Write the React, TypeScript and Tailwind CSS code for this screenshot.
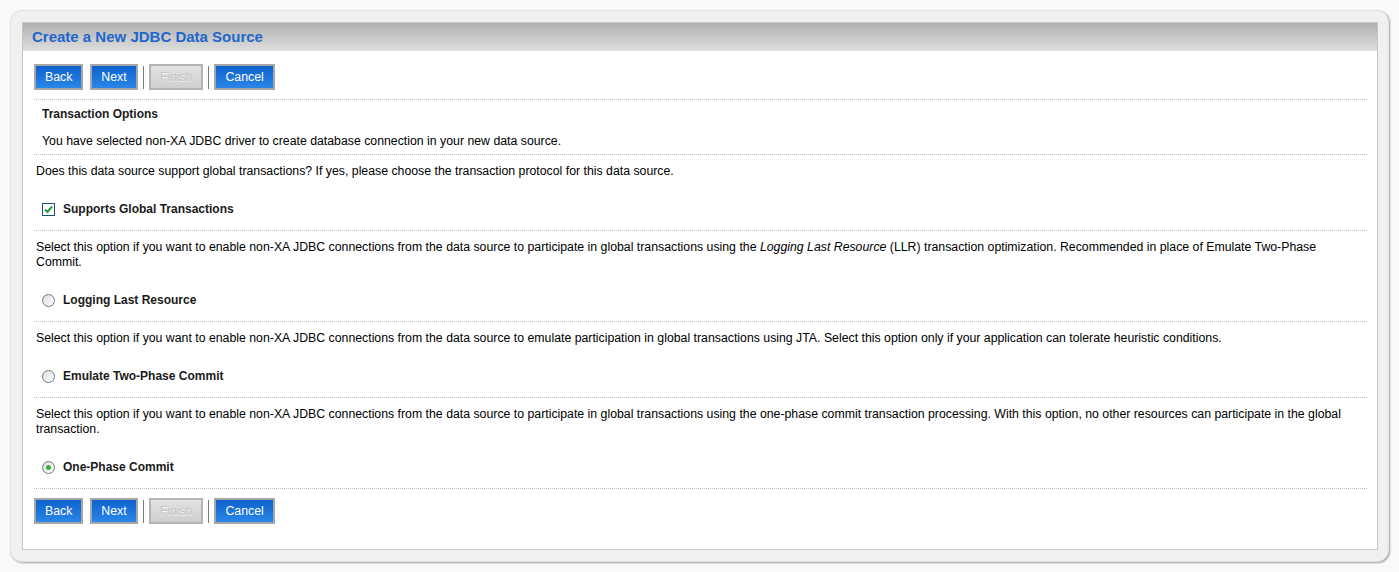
import type { ReactNode } from 'react';

const font = { fontFamily: '"Liberation Sans", Arial, sans-serif' };

function WizardButton({ label, disabled = false }: { label: string; disabled?: boolean }) {
  if (disabled) {
    return (
      <span className="flex h-[26px] items-center border-2 border-[#b4b4b4] bg-gradient-to-b from-[#e2e2e2] to-[#cfcfcf] px-[9px] text-[12.3px] text-[#c4c4c4] [text-shadow:0_1px_0_#f4f4f4]">
        {label}
      </span>
    );
  }
  return (
    <button className="flex h-[26px] items-center border-2 border-[#a6a6a6] bg-gradient-to-b from-[#0d62cc] to-[#2a86e8] px-[9px] text-[12.3px] text-white">
      {label}
    </button>
  );
}

function ButtonBar() {
  return (
    <div className="flex items-center">
      <WizardButton label="Back" />
      <span className="ml-[7px]">
        <WizardButton label="Next" />
      </span>
      <span className="mx-[5px] h-[23px] w-px bg-[#7a7a7a]" />
      <WizardButton label="Finish" disabled />
      <span className="mx-[5px] h-[23px] w-px bg-[#7a7a7a]" />
      <WizardButton label="Cancel" />
    </div>
  );
}

function Divider() {
  return <div className="border-t border-dotted border-[#bdbdbd]" />;
}

function Radio({ checked = false }: { checked?: boolean }) {
  return (
    <span className="flex h-[13px] w-[13px] items-center justify-center rounded-full border border-[#6f7985] bg-gradient-to-br from-[#dcdcdc] to-white">
      {checked && <span className="h-[5px] w-[5px] rounded-full bg-[#2fb43c]" />}
    </span>
  );
}

function Option({ control, label }: { control: ReactNode; label: string }) {
  return (
    <div className="ml-[8px] mt-[22px] flex h-4 items-center gap-[8px] text-[12px] font-bold text-[#1a1a1a]">
      {control}
      <span>{label}</span>
    </div>
  );
}

function Section({ text, option }: { text: ReactNode; option: ReactNode }) {
  return (
    <div className="pb-[13px] pt-[9px]">
      <p className="pl-[2px] pr-[10px] text-[12.3px] leading-[15px] text-black">{text}</p>
      {option}
    </div>
  );
}

export default function App() {
  return (
    <div style={font} className="min-h-screen bg-[#f9f9f9] p-[10px]">
      <div className="rounded-[12px] border border-[#e2e2e2] bg-[#f0f0f0] pb-[11px] pl-[11px] pr-[10px] pt-[11px] shadow-[1px_1px_2px_rgba(0,0,0,0.35)]">
        <div className="border border-[#c6c6c6] bg-white">
          <div className="flex h-[28px] items-center bg-gradient-to-b from-[#b0b0b0] to-[#dedede] pl-[9px]">
            <h1 className="text-[15px] font-bold text-[#1e66cc]">Create a New JDBC Data Source</h1>
          </div>

          <div className="pb-[25px] pl-[11px] pr-[10px] pt-[13px]">
            <ButtonBar />
            <div className="mt-[9px]">
              <Divider />
            </div>

            <div className="pb-[5px] pl-[8px] pt-[6px] text-[12.3px] leading-4 text-black">
              <h2 className="text-[12px] font-bold text-[#1a1a1a]">Transaction Options</h2>
              <p className="mt-[11px]">You have selected non-XA JDBC driver to create database connection in your new data source.</p>
            </div>
            <Divider />

            <Section
              text="Does this data source support global transactions? If yes, please choose the transaction protocol for this data source."
              option={
                <Option
                  label="Supports Global Transactions"
                  control={
                    <span className="flex h-[13px] w-[13px] items-center justify-center border border-[#1f4f7c] bg-white">
                      <svg width="9" height="9" viewBox="0 0 9 9">
                        <path d="M1 4.5 L3.5 7 L8 1.5" fill="none" stroke="#21a038" strokeWidth="2" />
                      </svg>
                    </span>
                  }
                />
              }
            />
            <Divider />

            <Section
              text={
                <>
                  Select this option if you want to enable non-XA JDBC connections from the data source to participate in global transactions using the{' '}
                  <i>Logging Last Resource</i> (LLR) transaction optimization. Recommended in place of Emulate Two-Phase Commit.
                </>
              }
              option={<Option label="Logging Last Resource" control={<Radio />} />}
            />
            <Divider />

            <Section
              text="Select this option if you want to enable non-XA JDBC connections from the data source to emulate participation in global transactions using JTA. Select this option only if your application can tolerate heuristic conditions."
              option={<Option label="Emulate Two-Phase Commit" control={<Radio />} />}
            />
            <Divider />

            <Section
              text="Select this option if you want to enable non-XA JDBC connections from the data source to participate in global transactions using the one-phase commit transaction processing. With this option, no other resources can participate in the global transaction."
              option={<Option label="One-Phase Commit" control={<Radio checked />} />}
            />
            <Divider />

            <div className="mt-[9px]">
              <ButtonBar />
            </div>
          </div>
        </div>
      </div>
    </div>
  );
}
